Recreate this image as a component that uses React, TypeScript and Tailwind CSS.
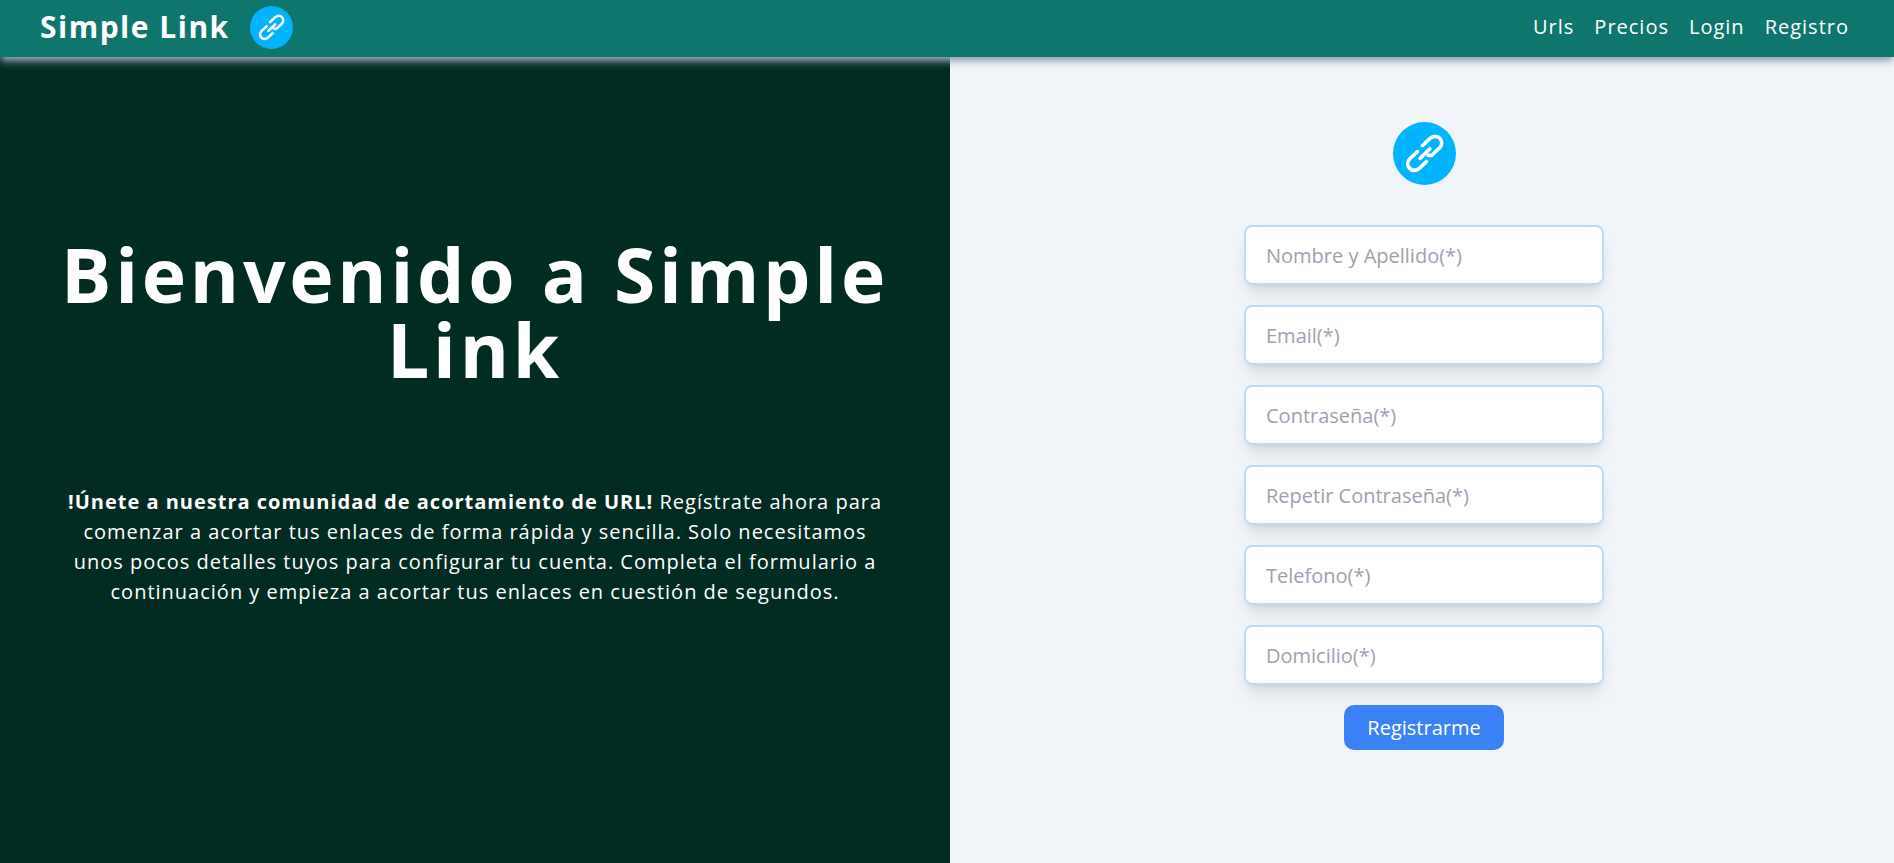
const FIELDS = [
  { id: "nombre", label: "Nombre y Apellido(*)", type: "text" },
  { id: "email", label: "Email(*)", type: "email" },
  { id: "password", label: "Contraseña(*)", type: "password" },
  { id: "password2", label: "Repetir Contraseña(*)", type: "password" },
  { id: "telefono", label: "Telefono(*)", type: "tel" },
  { id: "domicilio", label: "Domicilio(*)", type: "text" },
];

const LINKS = ["Urls", "Precios", "Login", "Registro"];

function Logo({ className }: { className: string }) {
  return (
    <svg viewBox="0 0 63 63" className={className} aria-hidden="true">
      <circle cx="31.5" cy="31.5" r="31.5" fill="#00b4ff" />
      <g fill="none" stroke="#fff" strokeWidth="3.7" strokeLinecap="round" strokeLinejoin="round">
        <path d="M29.5 23.5 37 16.5C40 13.7 44.5 13.7 47 16.5C49.5 19.3 49 23.5 46.3 26.2L38.5 33.5L35.2 33.3" />
        <path d="M33.5 39.5 26.5 46.2C23.5 49 19 49 16.5 46.2C14 43.4 14.2 39.3 17 36.5L24.5 29.7" />
        <path d="M27 36.3 36.8 27" />
      </g>
    </svg>
  );
}

export default function App() {
  return (
    <div className="flex min-h-screen flex-col font-['Open_Sans',sans-serif] text-xl/[30px]">
      <header className="relative z-10 flex items-center justify-between bg-[#0f766e] pt-[5px] pr-[45px] pb-2 pl-10 text-white shadow-[0_5px_8px_-1px_#94a3b8,0_3px_5px_-3px_#94a3b8]">
        <a href="#" className="flex items-center gap-5">
          <span className="text-3xl/[44px] font-bold tracking-wider">Simple Link</span>
          <Logo className="size-[43px]" />
        </a>
        <nav className="flex gap-5 tracking-wider">
          {LINKS.map((l) => (
            <a key={l} href="#">
              {l}
            </a>
          ))}
        </nav>
      </header>

      <main className="grid flex-1 grid-cols-[475fr_472fr]">
        <section className="flex flex-col justify-center gap-[100px] bg-[#022c22] px-15 pb-[76px] text-center text-white">
          <h1 className="text-[75px]/[75px] font-bold tracking-wider">Bienvenido a Simple Link</h1>
          <p className="tracking-wider">
            <strong>!Únete a nuestra comunidad de acortamiento de URL!</strong> Regístrate ahora para
            comenzar a acortar tus enlaces de forma rápida y sencilla. Solo necesitamos unos pocos
            detalles tuyos para configurar tu cuenta. Completa el formulario a continuación y empieza a
            acortar tus enlaces en cuestión de segundos.
          </p>
        </section>

        <section className="flex flex-col items-center justify-center bg-slate-100 pb-12 pl-1">
          <Logo className="mb-10 size-[63px]" />
          <form className="flex w-[360px] flex-col items-center gap-5" onSubmit={(e) => e.preventDefault()}>
            {FIELDS.map((f) => (
              <input
                key={f.id}
                id={f.id}
                type={f.type}
                aria-label={f.label}
                placeholder={f.label}
                className="h-15 w-full rounded-lg border-2 border-[#bfdbfe] bg-white px-5 shadow-[0_12px_19px_-4px_rgb(0_0_0/0.1),0_5px_8px_-5px_rgb(0_0_0/0.1)] placeholder:text-[#9ca3af]"
              />
            ))}
            <button type="submit" className="h-[45px] w-40 rounded-[10px] bg-[#3b82f6] text-white">
              Registrarme
            </button>
          </form>
        </section>
      </main>
    </div>
  );
}
